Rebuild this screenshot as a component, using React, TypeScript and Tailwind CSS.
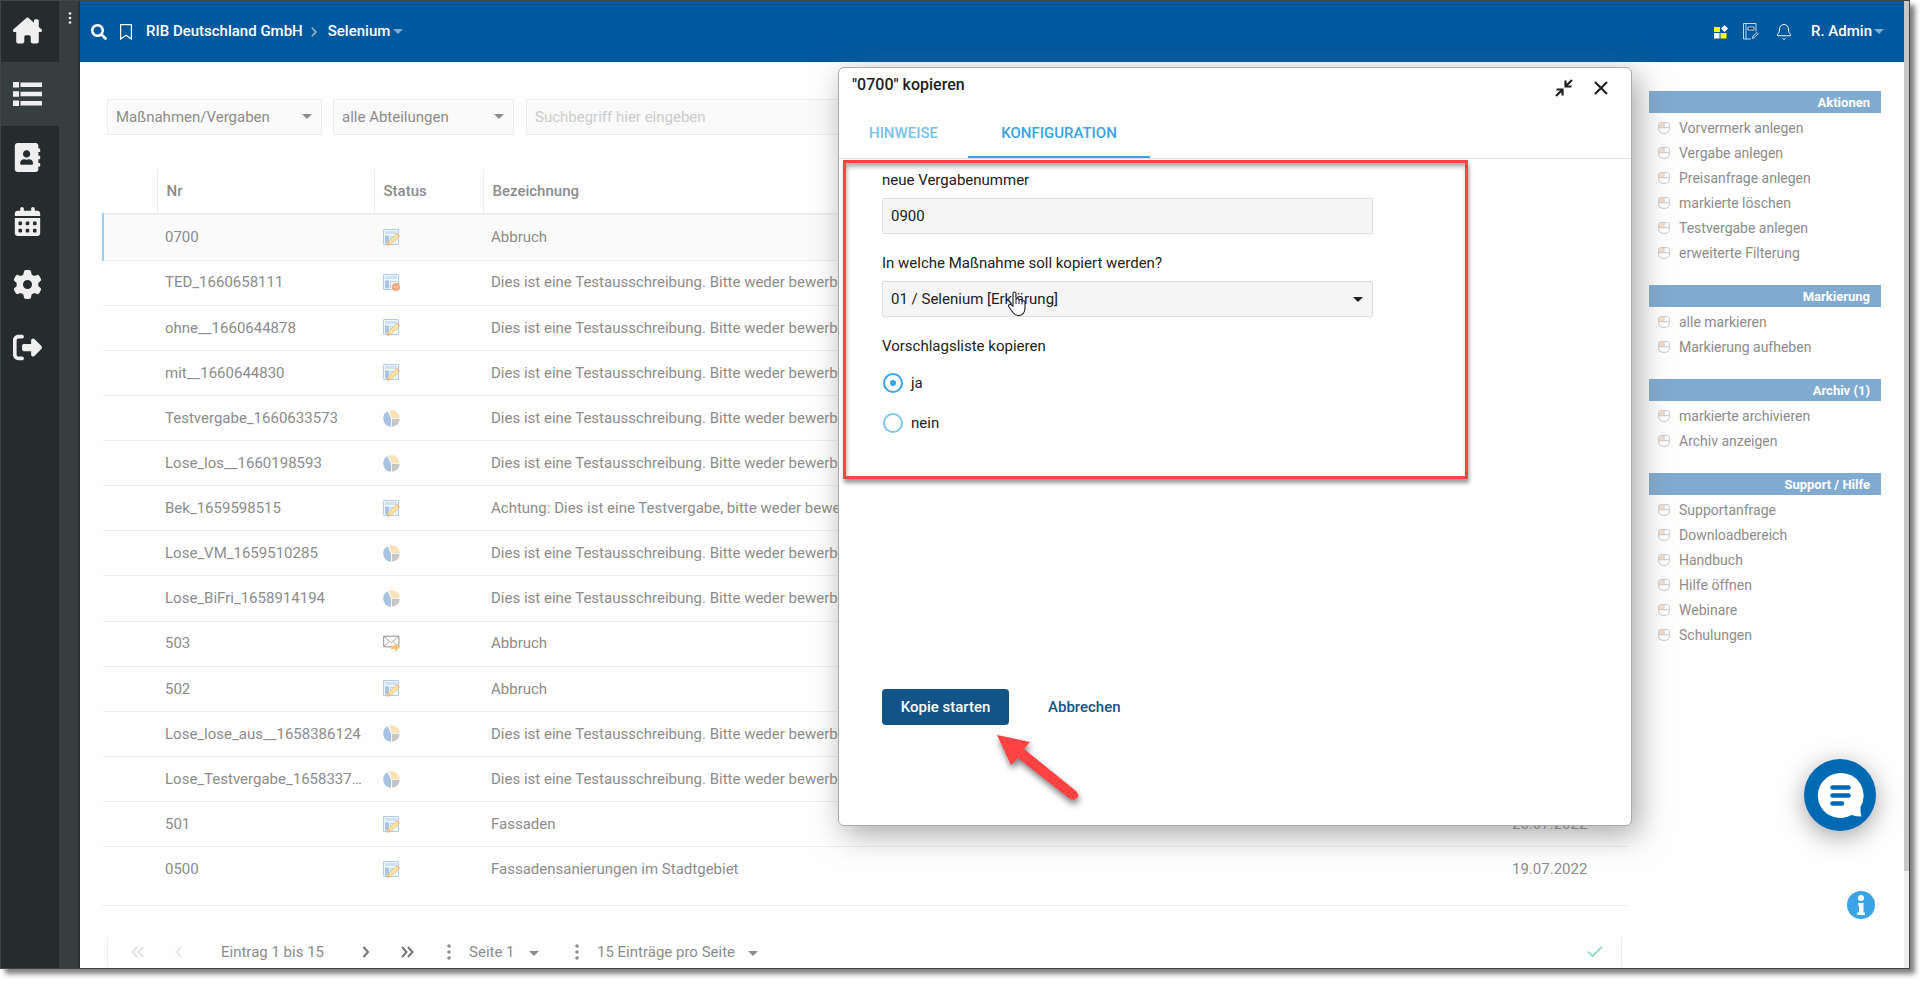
import { useState } from "react";
import type { ReactNode } from "react";
import { FaAddressBook, FaSearch } from "react-icons/fa";
import { FaCalendarDays, FaGear, FaHouseChimney, FaRightFromBracket } from "react-icons/fa6";
import { Bell, Check } from "lucide-react";

type Status = "edit" | "stop" | "pie" | "mail";

const TEST = "Dies ist eine Testausschreibung. Bitte weder bewerben noch Angebote abgeben.";

const rows: { nr: string; status: Status; name: string; date: string }[] = [
  { nr: "0700", status: "edit", name: "Abbruch", date: "18.08.2022" },
  { nr: "TED_1660658111", status: "stop", name: TEST, date: "16.08.2022" },
  { nr: "ohne__1660644878", status: "edit", name: TEST, date: "16.08.2022" },
  { nr: "mit__1660644830", status: "edit", name: TEST, date: "16.08.2022" },
  { nr: "Testvergabe_1660633573", status: "pie", name: TEST, date: "16.08.2022" },
  { nr: "Lose_los__1660198593", status: "pie", name: TEST, date: "11.08.2022" },
  { nr: "Bek_1659598515", status: "edit", name: "Achtung: Dies ist eine Testvergabe, bitte weder bewerben noch Angebote abgeben.", date: "04.08.2022" },
  { nr: "Lose_VM_1659510285", status: "pie", name: TEST, date: "03.08.2022" },
  { nr: "Lose_BiFri_1658914194", status: "pie", name: TEST, date: "27.07.2022" },
  { nr: "503", status: "mail", name: "Abbruch", date: "22.07.2022" },
  { nr: "502", status: "edit", name: "Abbruch", date: "21.07.2022" },
  { nr: "Lose_lose_aus__1658386124", status: "pie", name: TEST, date: "21.07.2022" },
  { nr: "Lose_Testvergabe_1658337…", status: "pie", name: TEST, date: "20.07.2022" },
  { nr: "501", status: "edit", name: "Fassaden", date: "20.07.2022" },
  { nr: "0500", status: "edit", name: "Fassadensanierungen im Stadtgebiet", date: "19.07.2022" },
];

const sections = [
  {
    title: "Aktionen",
    items: [
      "Vorvermerk anlegen",
      "Vergabe anlegen",
      "Preisanfrage anlegen",
      "markierte löschen",
      "Testvergabe anlegen",
      "erweiterte Filterung",
    ],
  },
  { title: "Markierung", items: ["alle markieren", "Markierung aufheben"] },
  { title: "Archiv (1)", items: ["markierte archivieren", "Archiv anzeigen"] },
  {
    title: "Support / Hilfe",
    items: ["Supportanfrage", "Downloadbereich", "Handbuch", "Hilfe öffnen", "Webinare", "Schulungen"],
  },
];

function Caret({ className = "" }: { className?: string }) {
  return (
    <svg viewBox="0 0 10 5" className={`h-[5px] w-[10px] shrink-0 fill-current ${className}`} aria-hidden="true">
      <path d="M0 0h10L5 5z" />
    </svg>
  );
}

function Dots({ className = "" }: { className?: string }) {
  return (
    <svg viewBox="0 0 4 16" className={`shrink-0 fill-current ${className}`} aria-hidden="true">
      <circle cx="2" cy="2" r="1.8" />
      <circle cx="2" cy="8" r="1.8" />
      <circle cx="2" cy="14" r="1.8" />
    </svg>
  );
}

function Chevrons({ d }: { d: string }) {
  return (
    <svg viewBox="0 0 14 12" className="h-3 w-[14px]" fill="none" stroke="currentColor" strokeWidth="2" aria-hidden="true">
      <path d={d} />
    </svg>
  );
}

function FormIcon() {
  return (
    <>
      <rect x=".5" y=".5" width="15" height="15" rx=".5" fill="#eef5fc" stroke="#b3cbea" />
      <rect x="2" y="2" width="12" height="3" fill="#cfe1f6" />
      <rect x="2" y="6.5" width="4" height="8" fill="#a9c4e6" />
      <path d="M7.5 14V7.5H14" fill="none" stroke="#b9cfea" />
    </>
  );
}

function StatusIcon({ status }: { status: Status }) {
  return (
    <svg viewBox="0 0 17 17" className="size-[17px]" role="img" aria-label={status}>
      {status === "edit" && (
        <>
          <FormIcon />
          <path d="M4 16.5l1-3.700 8.500-8 3 2.600-8.700 8z" fill="#f9e3a0" stroke="#e0c393" strokeWidth=".8" />
          <path d="M13.200 5l1-1 2.600 2.500-1 1z" fill="#f2bd94" />
          <path d="M4 16.500l1-3.700 2.800 2.600z" fill="#e3b991" />
        </>
      )}
      {status === "stop" && (
        <>
          <FormIcon />
          <circle cx="13" cy="13" r="3.800" fill="#f3ab85" stroke="#e69a72" strokeWidth=".6" />
          <path d="M11 13h4" stroke="#f8cdb6" strokeWidth="1.200" />
        </>
      )}
      {status === "pie" && (
        <>
          <path d="M8 8.400V16.700A8.200 8.200 0 0 1 4.600 1.300z" fill="#a7c3e0" />
          <path d="M8.700 7.900L5.900.7A8.200 8.200 0 0 1 16.700 7.900z" fill="#f8e2b8" />
          <path d="M8.900 8.800h7.800a8 8 0 0 1-7.800 7.900z" fill="#c6c6c6" />
        </>
      )}
      {status === "mail" && (
        <>
          <path d="M.7 1.200h15.200v10.600H.7z" fill="#fff" stroke="#8f8f8f" />
          <path d="M1 1.500l7.300 6.200 7.300-6.200M1 11.500l5-5M15.500 11.500l-5-5" fill="none" stroke="#9a9a9a" strokeWidth=".9" />
          <path d="M8 10.600h4V7.800l5 4.500-5 4.500V14H8z" fill="#f6c272" />
        </>
      )}
    </svg>
  );
}

function MouseIcon() {
  return (
    <svg viewBox="0 0 12 12" className="size-3 shrink-0" fill="none" stroke="#c9c9c9" aria-hidden="true">
      <path d="M2 1h3.500v4.500H1V2z" fill="#fbdcc4" stroke="none" />
      <path d="M2.500.600h7Q11.400.600 11.400 2.500v4.500q0 4.400-5.400 4.400T.600 7V2.500Q.600.600 2.500.600zM.600 5.700h10.800M6 .600v5" />
    </svg>
  );
}

function RailButton({ label, className = "", children }: { label: string; className?: string; children: ReactNode }) {
  return (
    <button type="button" aria-label={label} className={`flex w-full items-center pl-3 text-[#efefef] ${className}`}>
      {children}
    </button>
  );
}

function Rail() {
  return (
    <nav className="flex shrink-0 bg-[#363e40]">
      <div className="w-[58px] bg-[#262c2d]">
        <RailButton label="Start" className="h-[61px] pb-[2px]"><FaHouseChimney className="size-[29px]" /></RailButton>
        <RailButton label="Vergaben" className="h-16 bg-[#363e40]">
          <svg viewBox="0 0 29 24" className="h-6 w-[29px] fill-current">
            <path d="M0 0h6v5.500H0zM7.500.500H29v4.500H7.500zM0 9.200h6v5.500H0zM7.500 9.700H29v4.500H7.500zM0 18.500h6V24H0zM7.500 19H29v4.500H7.500z" />
          </svg>
        </RailButton>
        <RailButton label="Adressbuch" className="h-[63px]"><FaAddressBook className="size-[29px]" /></RailButton>
        <RailButton label="Kalender" className="h-16"><FaCalendarDays className="size-[29px]" /></RailButton>
        <RailButton label="Einstellungen" className="h-[63px]"><FaGear className="size-[29px]" /></RailButton>
        <RailButton label="Abmelden" className="h-[63px]"><FaRightFromBracket className="size-[29px]" /></RailButton>
      </div>
      <div className="w-[21px] border-r-2 border-[#2b3133] pt-[11px] pl-[9px] text-[#efefef]">
        <Dots className="h-3 w-1" />
      </div>
    </nav>
  );
}

function TopBar() {
  return (
    <header className="flex h-[61px] shrink-0 items-center bg-[#00589e] pr-[20px] pl-[11px] text-[15px] font-medium text-white">
      <button type="button" aria-label="Suche"><FaSearch className="size-4" /></button>
      <button type="button" aria-label="Lesezeichen" className="ml-[13px]">
        <svg viewBox="0 0 12 16" className="h-4 w-3" fill="none" stroke="currentColor" strokeWidth="1.200">
          <path d="M.6.6h10.800v14.400L6 11.200.6 15z" />
        </svg>
      </button>
      <a href="#firma" className="ml-[14px]">RIB Deutschland GmbH</a>
      <svg viewBox="0 0 6 10" className="mr-[11px] ml-[8px] h-[10px] w-[6px]" fill="none" stroke="#9dbfdc" strokeWidth="1.500" aria-hidden="true">
        <path d="M.8.8L5 5 .8 9.200" />
      </svg>
      <button type="button" className="flex items-center gap-[3px]">
        Selenium
        <Caret className="text-[#7facd0]" />
      </button>
      <div className="ml-auto flex items-center">
        <button type="button" aria-label="Apps">
          <svg viewBox="0 0 14 14" className="size-[14px]">
            <path d="M0 2h6v5H0zM6.500 8h6v5.500h-6z" fill="#ff0" />
            <path d="M0 8h5.500v5.500H0zM10.500 0L14 3.500 10.500 7 7 3.500z" fill="#fff" />
          </svg>
        </button>
        <button type="button" aria-label="Notizbuch" className="ml-[15px]">
          <svg viewBox="0 0 16 17" className="h-[17px] w-4" fill="none" stroke="#c3d8ea">
            <path d="M8 16H.5V.5h12.500v8M3 .5V16" />
            <path d="M5 4h6v3H5z" fill="#0a2f4f" />
            <path d="M9.500 15.500l.5-2.500 4-3.500 1.200 1.300-4 3.700z" />
          </svg>
        </button>
        <button type="button" aria-label="Mitteilungen" className="ml-[16px]">
          <Bell className="size-[18px]" strokeWidth={1.3} />
        </button>
        <button type="button" className="ml-[18px] flex items-center gap-[2px]">
          R. Admin
          <Caret className="text-[#7facd0]" />
        </button>
      </div>
    </header>
  );
}

function FilterSelect({ label, value, className }: { label: string; value: string; className: string }) {
  return (
    <div className={`relative ${className}`}>
      <select
        aria-label={label}
        className="h-9 w-full appearance-none rounded-xs border border-[#ececec] bg-[#fafafa] pr-8 pl-2 text-[15px] outline-none"
      >
        <option>{value}</option>
      </select>
      <Caret className="pointer-events-none absolute top-[15px] right-[10px]" />
    </div>
  );
}

function Listing() {
  return (
    <main className="flex min-w-0 flex-1 flex-col pt-[37px] pl-[22px] text-[15px] text-[#8c8c8c]">
      <div className="flex pr-[7px] pl-[5px]">
        <FilterSelect label="Ansicht" value="Maßnahmen/Vergaben" className="w-[215px]" />
        <FilterSelect label="Abteilung" value="alle Abteilungen" className="ml-[11px] w-[181px]" />
        <input
          aria-label="Suche"
          placeholder="Suchbegriff hier eingeben"
          className="ml-3 h-9 min-w-0 flex-1 rounded-xs border border-[#ececec] bg-[#fafafa] px-2 outline-none placeholder:text-[#cbcbcb]"
        />
      </div>

      <table className="mt-[34px] h-[722px] w-full table-fixed border-collapse text-left">
        <colgroup>
          <col className="w-[54px]" />
          <col className="w-[217px]" />
          <col className="w-[109px]" />
          <col />
          <col className="w-[125px]" />
        </colgroup>
        <thead>
          <tr className="h-[45px] border-b-2 border-[#eeeeee]">
            <th />
            <th className="border-l border-[#eeeeee] pl-[9px] font-medium">Nr</th>
            <th className="border-l border-[#eeeeee] pl-[9px] font-medium">Status</th>
            <th className="border-l border-[#eeeeee] pl-[9px] font-medium">Bezeichnung</th>
            <th className="border-l border-[#eeeeee] pl-[9px] font-medium">Datum</th>
          </tr>
        </thead>
        <tbody>
          {rows.map((row, i) => (
            <tr
              key={row.nr}
              className={i === 0 ? "border-b border-[#eeeeee] bg-[#fafafa]" : "border-b border-[#eeeeee] last:border-0"}
            >
              <td className={i === 0 ? "border-l-2 border-l-[#94cff3]" : ""} />
              <td className="truncate pr-1 pl-[8px]">{row.nr}</td>
              <td className="pl-[9px]"><StatusIcon status={row.status} /></td>
              <td className="truncate pl-[8px]">{row.name}</td>
              <td className="pl-[9px]">{row.date}</td>
            </tr>
          ))}
        </tbody>
      </table>

      <div className="mt-[14px] border-t border-[#eeeeee] pt-[31px] pr-[6px] pl-[5px]">
        <div className="flex h-[30px] items-center border-x border-[#eeeeee] pr-[16px] pl-[23px]">
          <button type="button" aria-label="Erste Seite" disabled className="text-[#e2e2e2]"><Chevrons d="M6 1L1.500 6 6 11M12 1L7.500 6l4.500 5" /></button>
          <button type="button" aria-label="Vorige Seite" disabled className="ml-[27px] text-[#e8e8e8]"><Chevrons d="M9 1L4.500 6 9 11" /></button>
          <span className="ml-[35px]">Eintrag 1 bis 15</span>
          <button type="button" aria-label="Nächste Seite" className="ml-[35px] text-[#757575]"><Chevrons d="M4.500 1L9 6l-4.500 5" /></button>
          <button type="button" aria-label="Letzte Seite" className="ml-[27px] text-[#757575]"><Chevrons d="M2 1l4.500 5L2 11M8 1l4.500 5L8 11" /></button>
          <Dots className="ml-[33px] h-4 w-1" />
          <div className="relative ml-[18px] w-[70px]">
            <select aria-label="Seite" className="w-full appearance-none outline-none">
              <option>Seite 1</option>
            </select>
            <Caret className="pointer-events-none absolute top-[10px] right-0" />
          </div>
          <Dots className="ml-[36px] h-4 w-1" />
          <div className="relative ml-[18px] w-[161px]">
            <select aria-label="Einträge pro Seite" className="w-full appearance-none outline-none">
              <option>15 Einträge pro Seite</option>
            </select>
            <Caret className="pointer-events-none absolute top-[10px] right-0" />
          </div>
          <Check className="ml-auto size-5 text-[#84d9b3]" strokeWidth={2} />
        </div>
      </div>
    </main>
  );
}

function ActionPanel() {
  return (
    <aside className="ml-[21px] flex w-[232px] shrink-0 flex-col gap-[20px] pt-[29px] text-sm text-[#8c8c8c]">
      {sections.map((section) => (
        <section key={section.title}>
          <h2 className="mb-[2px] h-[22px] bg-[#80aacf] pr-[11px] text-right text-[13px] leading-[23px] font-bold text-white">
            {section.title}
          </h2>
          <ul>
            {section.items.map((item) => (
              <li key={item}>
                <a href="#aktion" className="flex h-[25px] items-center gap-[9px] pl-[9px]">
                  <MouseIcon />
                  {item}
                </a>
              </li>
            ))}
          </ul>
        </section>
      ))}
    </aside>
  );
}

function CopyDialog() {
  const [number, setNumber] = useState("0900");
  const [copyList, setCopyList] = useState("ja");

  return (
    <div
      role="dialog"
      aria-labelledby="dialog-title"
      className="absolute top-[66px] right-[277px] flex h-[759px] w-[794px] flex-col rounded-md border border-[#aaaaaa] bg-white text-[15px] text-[#212121] shadow-[6px_8px_30px_rgba(110,110,110,0.6)]"
    >
      <div className="flex h-[37px] shrink-0 items-start justify-between pt-[5px] pl-[13px]">
        <h1 id="dialog-title" className="text-base font-medium">"0700" kopieren</h1>
        <div className="flex items-center gap-[21px] pt-[6px] pr-[23px]">
          <button type="button" aria-label="Verkleinern">
            <svg viewBox="0 0 18 18" className="size-[18px]" fill="none" stroke="currentColor" strokeWidth="2.200">
              <path d="M17 1l-6 6M10.500 1.500v6h6M1 17l6-6M1.500 10.500h6v6" />
            </svg>
          </button>
          <button type="button" aria-label="Schließen">
            <svg viewBox="0 0 14 14" className="size-[14px]" stroke="currentColor" strokeWidth="2.200">
              <path d="M1 1l12 12M13 1L1 13" />
            </svg>
          </button>
        </div>
      </div>
      <div role="tablist" className="flex h-[54px] shrink-0 border-b border-[#e0e0e0] font-medium text-[#39a3e5]">
        <button type="button" role="tab" aria-selected="false" className="w-[129px] pt-[3px] text-[#7ac0ec]">HINWEISE</button>
        <button type="button" role="tab" aria-selected="true" className="w-[182px] border-b-2 border-[#39a3e5] pt-[5px]">KONFIGURATION</button>
      </div>

      <form className="flex flex-1 flex-col px-[43px] pt-[9px]" onSubmit={(e) => e.preventDefault()}>
        <label htmlFor="number" className="leading-6">neue Vergabenummer</label>
        <input
          id="number"
          value={number}
          onChange={(e) => setNumber(e.target.value)}
          className="mt-[6px] h-9 w-[491px] rounded-xs border border-[#dcdcdc] bg-[#f5f5f5] px-2 outline-none"
        />
        <label htmlFor="target" className="mt-[17px] leading-6">In welche Maßnahme soll kopiert werden?</label>
        <div className="relative mt-[6px] w-[491px]">
          <select id="target" className="h-9 w-full appearance-none rounded-xs border border-[#dcdcdc] bg-[#f5f5f5] px-2 outline-none">
            <option>01 / Selenium [Erklärung]</option>
          </select>
          <Caret className="pointer-events-none absolute top-[16px] right-[10px]" />
        </div>
        <fieldset className="mt-[17px]">
          <legend className="leading-6">Vorschlagsliste kopieren</legend>
          <div className="mt-[5px] flex flex-col">
            {["ja", "nein"].map((option) => (
              <label key={option} className="flex h-10 items-center gap-2">
                <input
                  type="radio"
                  name="copy-list"
                  value={option}
                  checked={copyList === option}
                  onChange={() => setCopyList(option)}
                  className="ml-px grid size-5 appearance-none place-items-center rounded-full border-2 border-[#82c4ee] checked:border-[#39a3e5] checked:before:size-[6px] checked:before:rounded-full checked:before:bg-[#39a3e5]"
                />
                {option}
              </label>
            ))}
          </div>
        </fieldset>
        <div className="mt-auto mb-[100px] flex gap-[39px] font-medium">
          <button type="submit" className="h-9 w-[127px] rounded-sm bg-[#125488] text-white">Kopie starten</button>
          <button type="button" className="text-[#125488]">Abbrechen</button>
        </div>
      </form>

      {/* marker frame, arrow and pointer */}
      <div className="pointer-events-none absolute top-[92px] left-[4px] h-[319px] w-[625px] border-3 border-[#ff4242] shadow-[1px_4px_4px_rgba(0,0,0,0.4),inset_1px_4px_4px_rgba(0,0,0,0.3)]" />
      <svg viewBox="0 0 96 80" className="pointer-events-none absolute top-[662px] left-[151px] h-20 w-24 drop-shadow-[1px_4px_3px_rgba(0,0,0,0.5)]" aria-hidden="true">
        <path d="M7 5l33 7-6 7 52 42q4 4 1 7t-7 1L28 28l-7 7z" fill="#ff4242" />
      </svg>
      <svg viewBox="0 0 20 26" className="pointer-events-none absolute top-[223px] left-[168px] h-[26px] w-5" aria-hidden="true">
        <path
          d="M6 15V2.800q0-1.800 1.500-1.800T9 2.800V9q0-1.500 1.500-1.500T12 9.200v.8q0-1.500 1.500-1.500T15 10.200v.8q.2-1.200 1.500-1.200T18 11.500V17q0 3-1.500 5-1.500 2.500-5 2.500-3.500 0-5.500-3L2 16q-1-1.600.2-2.300T4.600 14z"
          fill="#fff"
          stroke="#1f1f2b"
          strokeWidth="1.100"
        />
        <path d="M9 9v4M12 10v3M15 11v2.500" stroke="#1f1f2b" />
      </svg>
    </div>
  );
}

export default function App() {
  return (
    <div className="h-screen bg-white pr-[15px] pb-4 font-[Roboto,sans-serif]">
      <div className="relative h-full border border-[#444444] bg-[#fefefe] shadow-[5px_5px_5px_#808080]">
        <div className="flex h-full overflow-hidden">
          <Rail />
          <div className="flex min-w-0 flex-1 flex-col">
            <TopBar />
            <div className="flex min-h-0 flex-1 pr-[23px]">
              <Listing />
              <ActionPanel />
            </div>
          </div>
          <div className="w-[5px] shrink-0 bg-[#eeeeef]">
            <div className="h-[90%] bg-[#c8c8ca]" />
          </div>
        </div>

        <CopyDialog />

        <button
          type="button"
          aria-label="Chat"
          className="absolute right-[33px] bottom-[137px] size-[72px] rounded-full bg-[#0069b4] shadow-[0_6px_24px_rgba(0,0,0,0.35)]"
        >
          <svg viewBox="0 0 72 72" className="size-[72px]">
            <path d="M36 14a22.500 22.500 0 1 0 11.500 42q5 1.500 10 1.500-1.500-4-1-9.500A22.500 22.500 0 0 0 36 14z" fill="#fff" />
            <path d="M28.500 28.500h16M28.500 36.500h16M28.500 44.500h9.500" stroke="#0069b4" strokeWidth="4.600" strokeLinecap="round" />
          </svg>
        </button>
        <button type="button" aria-label="Information" className="absolute right-[34px] bottom-[49px] size-7">
          <svg viewBox="0 0 28 28" className="size-7">
            <circle cx="14" cy="14" r="14" fill="#3aa4e6" />
            <circle cx="14" cy="7" r="3" fill="#fff" />
            <path d="M11 12h5.500v9.500H18V24h-7.800v-2.500H12v-7.200h-1z" fill="#fff" />
          </svg>
        </button>
      </div>
    </div>
  );
}
